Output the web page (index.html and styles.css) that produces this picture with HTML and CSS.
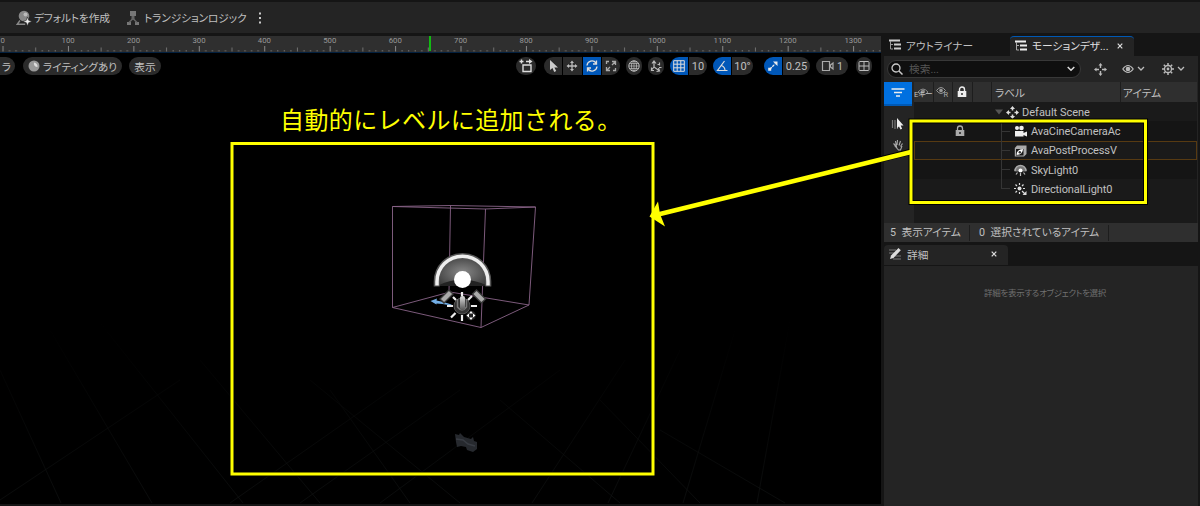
FILE: index.html
```
<!DOCTYPE html>
<html lang="ja">

<head>
  <meta charset="UTF-8">
  <meta name="viewport" content="width=device-width, initial-scale=1.0">
  <title>Motion Design</title>
  <link rel="stylesheet" href="styles.css">
</head>

<body>
  <div class="editor">
    <header class="toolbar">
      <svg class="icon" width="16" height="16" viewBox="0 0 16 16">
        <circle cx="8" cy="6" r="5.3" fill="#888" />
        <circle cx="9.5" cy="4.5" r="2" fill="#bbb" />
        <path d="M4 10.500L1.200 14.300h8" fill="none" stroke="#888" stroke-width="1.400" />
        <path d="M11.500 7l1.200 3.300 3.300 1.200-3.300 1.200L11.500 16l-1.200-3.300L7 11.500l3.300-1.200z" fill="#eee" stroke="#242424" stroke-width=".6" />
      </svg>
      <span class="tool-label tool-default">デフォルトを作成</span>
      <svg class="icon icon-logic" width="14" height="16" viewBox="0 0 14 16">
        <path d="M4 1h6v5H4zM1 12h4v3H1zM9 12h4v3H9z" fill="#777" />
        <path d="M7 6v4" stroke="#666" stroke-width="3" />
        <path d="M7 8.500L3 12.500M7 8.500l4 4" fill="none" stroke="#666" stroke-width="1.500" />
      </svg>
      <span class="tool-label tool-logic">トランジションロジック</span>
      <svg class="icon icon-more" width="4" height="14" viewBox="0 0 4 14">
        <path d="M1 1.500h2v2H1zM1 6h2v2H1zM1 10.500h2v2H1z" fill="#ccc" />
      </svg>
    </header>

    <main class="workspace">
      <section class="stage">
        <div class="ruler">
          <div class="ruler-labels">
            <span>0</span><span>100</span><span>200</span><span>300</span><span>400</span><span>500</span><span>600</span><span>700</span><span>800</span><span>900</span><span>1000</span><span>1100</span><span>1200</span><span>1300</span>
          </div>
          <svg class="ruler-ticks" width="881" height="6">
            <defs>
              <pattern id="ticks" x="2.500" width="65.430" height="6" patternUnits="userSpaceOnUse">
                <path d="M.5 0v5.500" stroke="#888" />
                <path d="M33.200 1.500v4" stroke="#707070" />
                <path d="M7 4v1.500M13.600 4v1.500M20.100 4v1.500M26.700 4v1.500M39.800 4v1.500M46.300 4v1.500M52.800 4v1.500M59.400 4v1.500" stroke="#707070" />
              </pattern>
            </defs>
            <rect width="881" height="6" fill="url(#ticks)" />
          </svg>
          <div class="playhead"></div>
        </div>

        <div class="viewport">
          <svg class="scene" width="881" height="451" viewBox="0 53 881 451">
            <defs>
              <linearGradient id="fade" x1="0" y1="320" x2="0" y2="503" gradientUnits="userSpaceOnUse">
                <stop offset="0" stop-color="#000" />
                <stop offset="1" stop-color="#101212" />
              </linearGradient>
              <radialGradient id="dome" cx=".5" cy=".55" r=".6">
                <stop offset="0" stop-color="#888" />
                <stop offset="1" stop-color="#383838" />
              </radialGradient>
              <linearGradient id="ray" x1="0" y1="0" x2="0" y2="1">
                <stop offset="0" stop-color="#ddd" />
                <stop offset="1" stop-color="#555" />
              </linearGradient>
            </defs>
            <!-- floor grid -->
            <path class="floor" d="M0 370L61 503M50 330L152 503M90 310L243 503M200 360L320 503M330 390L410 503M790 320L757 503M735 330L683 503M680 350L608 503M625 360L532 503M0 500L180 380M230 503L420 370M300 503L460 390M380 503L560 370M310 380L460 503M500 400L620 503M600 400L700 503M660 430L785 503" />
            <!-- bounds -->
            <g class="bounds">
              <path d="M392.500 206.500L450 205.500L535.500 207L485 209ZM392.500 307.500L450 292L529 305L481 327.500Z" />
              <path d="M392.500 206.500V307.500M450.500 205.500L449 292M535.500 207L529 305M485.500 209L481 327.500" />
            </g>
            <path d="M430.500 301l6.500-2.500-.5 2 7 1.500 8 2.500v1l-9-1.500-6-.5v1z" fill="#72aee6" />
            <!-- sky light -->
            <path d="M436 286a26.500 31 0 0 1 53 0z" fill="url(#dome)" />
            <path d="M437 286q25-13 51 0z" fill="#222" />
            <path d="M436.700 286.500v-5a25.800 25.500 0 0 1 51.600 0v5" fill="none" stroke="#555" stroke-width="6" />
            <path d="M437 285.500v-4a25.500 25.300 0 0 1 51 0v4" fill="none" stroke="#eee" stroke-width="3.500" />
            <circle cx="462.500" cy="279.500" r="8.500" fill="#fff" />
            <path d="M441.500 301.500l10-10M484 301.500l-10-10" stroke="#3a3a3a" stroke-width="7" />
            <path d="M442.500 300.500l8-8M483 300.500l-8-8" stroke="#aaa" stroke-width="4.500" />
            <!-- directional light -->
            <circle cx="462" cy="306" r="8" fill="#333" stroke="#555" />
            <path d="M462 292v4M462 315v6M447 306h6M471 306h6M451 317.500l4.500-4.500M453 297l3 3M472 296l-4 4" stroke="#eee" stroke-width="2.200" />
            <path d="M457.500 299v8q4.500 6 9 0v-8" fill="none" stroke="#777" stroke-width="1.500" />
            <rect x="460" y="296" width="5" height="14" rx="2" fill="url(#ray)" />
            <circle cx="471" cy="315.500" r="4.800" fill="#222" />
            <path d="M471 311l2 2.500h-4zM471 320l-2-2.500h4zM466.500 315.500l2.500-2v4zM475.500 315.500l-2.500 2v-4z" fill="#fff" />
            <!-- camera -->
            <path d="M455 434l4 1 1-2 4 4 7 2 2-2 1 4 3 1v7l-4 3-6-2-1-3-5-1-4 1-1-5z" fill="#26292e" />
            <path d="M456 439l7 1 5 4 7 2" fill="none" stroke="#383c43" stroke-width="1.500" />
          </svg>

          <div class="view-controls">
            <span class="pill pill-camera">ラ</span>
            <span class="pill pill-lit">
              <svg width="12" height="12" viewBox="0 0 12 12">
                <circle cx="6" cy="6" r="5.500" fill="#999" />
                <path d="M6 2.500a3.500 3.500 0 0 0 3.500 4.500A4 4 0 0 0 6 2.500z" fill="#ddd" />
              </svg>ライティングあり</span>
            <span class="pill pill-show">表示</span>

            <span class="pill round-wide">
              <svg width="16" height="16" viewBox="0 0 16 16">
                <path d="M5 7h8v6.500H5zM1.500 3.500h4M3.500 1.500v4M8 3.500h4" fill="none" stroke="#ddd" stroke-width="1.400" />
                <path d="M11 1l3.500 2.500L11 6z" fill="#ddd" />
              </svg>
            </span>
            <span class="group transform">
              <span class="cell"><svg width="12" height="14" viewBox="0 0 12 14"><path d="M3 1v10l2.500-2 1.700 4 2-1-1.800-3.500H11z" fill="#ccc" /></svg></span>
              <span class="cell"><svg width="12" height="12" viewBox="0 0 12 12"><path d="M6 2v8M2 6h8" stroke="#bbb" stroke-width="1.300" /><path d="M6 .5l2 2.500H4zM6 11.500L4 9h4zM.5 6L3 4v4zM11.500 6L9 8V4z" fill="#bbb" /></svg></span>
              <span class="cell active"><svg width="14" height="14" viewBox="0 0 14 14"><path d="M2 6.500a5 5 0 0 1 9-2.500M12 7.500a5 5 0 0 1-9 2.500M11.500 1.500V5H8M2.500 12.500V9H6" fill="none" stroke="#ddd" stroke-width="1.300" /></svg></span>
              <span class="cell"><svg width="12" height="12" viewBox="0 0 12 12"><path d="M7 1.500h3.500v3.500M10.500 1.500L7 5M5 10.500H1.500V7M1.500 10.500L5 7M1.500 4V1.500H4M8 10.500h2.500V8" fill="none" stroke="#aaa" stroke-width="1.300" /></svg></span>
            </span>
            <span class="pill round globe">
              <svg width="12" height="12" viewBox="0 0 12 12"><path d="M1 6h10M6 1v10M1.800 3.500h8.400M1.800 8.500h8.400" stroke="#bbb" stroke-width=".7" /><circle cx="6" cy="6" r="5.200" fill="none" stroke="#bbb" /><ellipse cx="6" cy="6" rx="2.500" ry="5" fill="none" stroke="#bbb" stroke-width=".8" /></svg>
            </span>
            <span class="pill round surface">
              <svg width="13" height="13" viewBox="0 0 13 13"><path d="M4 2v5l5 3.500M2 3.500L4 1l2 2.500M6.500 11.500L9.500 11 8.500 8M4 7l-2 2.500M1.500 7.500v3h2.500M7.500 4.500h2M9.500 2.500v3M9 7.500h2.500" fill="none" stroke="#bbb" stroke-width="1.200" /></svg>
            </span>
            <span class="group snap-grid">
              <span class="cell active"><svg width="12" height="12" viewBox="0 0 12 12"><path d="M.7.7h10.600v10.600H.7zM4.200.7v10.600M7.800.7v10.600M.7 4.200h10.600M.7 7.800h10.600" fill="none" stroke="#ddd" /></svg></span>
              <span class="cell">10</span>
            </span>
            <span class="group snap-angle">
              <span class="cell active"><svg width="12" height="12" viewBox="0 0 12 12"><path d="M8.500 1L1.500 10.500H11.500M5.500 5.500q3.500 1.500 3.500 5" fill="none" stroke="#ddd" stroke-width="1.200" /></svg></span>
              <span class="cell">10°</span>
            </span>
            <span class="group snap-scale">
              <span class="cell active"><svg width="12" height="12" viewBox="0 0 12 12"><path d="M3 9l5-5" stroke="#eee" stroke-width="1.300" stroke-dasharray="2.500 .8" /><path d="M6 1.500h4.500V6zM1.200 7.800h3v3h-3z" fill="#eee" /></svg></span>
              <span class="cell">0.25</span>
            </span>
            <span class="pill speed"><svg width="14" height="12" viewBox="0 0 14 12"><path d="M1.500 1.500h7v9h-7zM9.500 5l2.500-2v6L9.500 7z" fill="none" stroke="#aaa" stroke-width="1.200" /></svg>1</span>
            <span class="pill round layout">
              <svg width="12" height="12" viewBox="0 0 12 12"><rect x="1" y="1.500" width="10" height="9" rx="1" fill="none" stroke="#bbb" /><path d="M6 1.500v9M1 6h10" stroke="#bbb" /></svg>
            </span>
          </div>
        </div>
      </section>

      <aside class="sidebar">
        <div class="tabs">
          <div class="tab tab-outliner">
            <svg width="12" height="12" viewBox="0 0 12 12"><path d="M0 1.500h11M5 5.500h7M5 9.500h7" stroke="#ccc" stroke-width="2.200" /><path d="M1.500 2v8H4M1.500 5.500H4" fill="none" stroke="#999" /></svg>
            <span>アウトライナー</span>
          </div>
          <div class="tab tab-motion selected">
            <svg width="12" height="12" viewBox="0 0 12 12"><path d="M0 1.500h11M5 5.500h7M5 9.500h7" stroke="#eee" stroke-width="2.200" /><path d="M1.500 2v8H4M1.500 5.500H4" fill="none" stroke="#aaa" /></svg>
            <span>モーションデザ...</span>
            <svg class="close" width="6" height="6" viewBox="0 0 6 6"><path d="M.7.7l4.600 4.600M5.300.7L.7 5.300" stroke="#ddd" stroke-width="1.200" /></svg>
          </div>
        </div>

        <div class="search-row">
          <div class="search">
            <svg width="12" height="12" viewBox="0 0 12 12"><circle cx="5" cy="5" r="4" fill="none" stroke="#ccc" stroke-width="1.300" /><path d="M8 8l3.500 3.500" stroke="#ccc" stroke-width="1.500" /></svg>
            <span>検索...</span>
            <svg class="chevron" width="8" height="6" viewBox="0 0 8 6"><path d="M.7 1L4 4.300 7.300 1" fill="none" stroke="#ddd" stroke-width="1.500" /></svg>
          </div>
          <svg class="act-move" width="13" height="13" viewBox="0 0 13 13"><path d="M6.500 0l2 2.500h-4zM6.500 13l-2-2.500h4zM0 6.500l2.500-2v4zM13 6.500l-2.500 2v-4zM5.800 2h1.400v3H5.800zM5.800 8h1.400v3H5.800zM2 5.800h3v1.400H2zM8 5.800h3v1.400H8z" fill="#bbb" /></svg>
          <svg class="act-eye" width="24" height="12" viewBox="0 0 24 12"><path d="M.8 6q5.200-7 10.400 0-5.200 7-10.400 0z" fill="none" stroke="#bbb" stroke-width="1.200" /><circle cx="6" cy="6" r="2.300" fill="#bbb" /><path d="M16 4l3 3 3-3" fill="none" stroke="#bbb" stroke-width="1.300" /></svg>
          <svg class="act-gear" width="24" height="12" viewBox="0 0 24 12"><circle cx="6" cy="6" r="3.500" fill="none" stroke="#bbb" stroke-width="1.300" /><circle cx="6" cy="6" r="1.400" fill="#bbb" /><path d="M6 0v2M6 10v2M0 6h2M10 6h2M1.800 1.800l1.500 1.500M8.700 8.700l1.500 1.500M1.800 10.200l1.500-1.500M8.700 3.300l1.500-1.500" stroke="#bbb" stroke-width="1.500" /><path d="M16 4l3 3 3-3" fill="none" stroke="#bbb" stroke-width="1.300" /></svg>
        </div>

        <div class="outliner">
          <div class="side-tools">
            <div class="filter">
              <svg width="14" height="10" viewBox="0 0 14 10"><path d="M.5 1h13M3 4.500h8M5 8h4" stroke="#eee" stroke-width="1.500" /></svg>
            </div>
            <svg class="pick" width="14" height="14" viewBox="0 0 14 14"><path d="M1.500 3v8M4 3v9M6.500 4v8" stroke="#777" stroke-width="1.200" /><path d="M6 1v10l2-1.500 1.500 3 1.600-.8L9.700 8.500H12.500z" fill="#eee" /></svg>
            <svg class="hand" width="12" height="12" viewBox="0 0 12 12"><path d="M1.500 4.500l3 3L3.500 2M5 6L5.500 1M7 6.500L8.500 2M8.500 7.500l2-3M2.500 6.500l4 4.500h2l1.500-4" fill="none" stroke="#aaa" stroke-width="1.100" /></svg>
          </div>

          <div class="tree">
            <div class="tree-head">
              <span class="col narrow eye-col">
                <svg width="12" height="10" viewBox="0 0 12 10"><path d="M1 5q5-6 10 0-5 6-10 0z" fill="none" stroke="#888" /><circle cx="6" cy="4.500" r="2" fill="#888" /></svg>
                <span class="eye-text">Eキー</span>
              </span>
              <span class="col narrow">
                <svg width="14" height="12" viewBox="0 0 14 12"><path d="M.5 4.500q4.500-6 9 0-4.500 6-9 0z" fill="none" stroke="#999" /><circle cx="5" cy="4.500" r="1.800" fill="#999" /><text class="rt" x="7.500" y="11">R</text></svg>
              </span>
              <span class="col narrow">
                <svg width="10" height="12" viewBox="0 0 10 12"><path d="M.7 5h8.600v6H.7z" fill="#eee" /><path d="M2.500 5V3.500a2.500 2.500 0 0 1 5 0V5" fill="none" stroke="#eee" stroke-width="1.400" /><circle cx="5" cy="8" r="1" fill="#333" /></svg>
              </span>
              <span class="col narrow"></span>
              <span class="col col-label">ラベル</span>
              <span class="col col-item">アイテム</span>
            </div>
            <div class="row root">
              <svg class="caret" width="8" height="6" viewBox="0 0 8 6"><path d="M0 .5h8L4 5.500z" fill="#555" /></svg>
              <svg width="13" height="13" viewBox="0 0 13 13"><path d="M6.500 0l2.500 3H7.300v1.500H5.700V3H4zM6.500 13L4 10h1.700V8.500h1.600V10H9zM0 6.500L3 4v1.700h1.500v1.600H3V9zM13 6.500L10 9V7.300H8.500V5.700H10V4z" fill="#ddd" /></svg>
              <span>Default Scene</span>
            </div>
            <div class="row dark locked">
              <svg class="lock" width="10" height="12" viewBox="0 0 10 12"><path d="M.7 5h8.600v6H.7z" fill="#aaa" /><path d="M2.500 5V3.500a2.500 2.500 0 0 1 5 0V5" fill="none" stroke="#aaa" stroke-width="1.300" /><circle cx="5" cy="8" r="1" fill="#222" /></svg>
              <span class="branch"></span>
              <svg width="13" height="12" viewBox="0 0 13 12"><circle cx="3" cy="3" r="2" fill="#eee" /><circle cx="7.500" cy="3" r="2.300" fill="#eee" /><path d="M1 6h8.500v5.500H1zM9.500 8L13 6.500v5L9.500 10z" fill="#eee" /></svg>
              <span>AvaCineCameraAc</span>
            </div>
            <div class="row outlined">
              <span class="branch"></span>
              <svg width="13" height="12" viewBox="0 0 13 12"><path d="M3 .5h9.500V9L10 11.500H.8V3z" fill="#aaa" /><path d="M2 4h7.500v6.500H2z" fill="#1a1a1a" /><path d="M2.500 10q0-5.500 6.500-6 0 5.500-6.500 6z" fill="#fff" /><circle cx="5.800" cy="7.200" r="1.200" fill="#333" /></svg>
              <span>AvaPostProcessV</span>
            </div>
            <div class="row dark">
              <span class="branch"></span>
              <svg width="13" height="12" viewBox="0 0 13 12"><path d="M.5 7.500a6 6 0 0 1 12 0z" fill="#777" /><path d="M1 7a5.500 5.500 0 0 1 11 0" fill="none" stroke="#aaa" stroke-width="1.400" /><circle cx="6.500" cy="6.500" r="2" fill="#fff" /><path d="M6.500 9v3M3.500 8.500l-1.500 2M9.500 8.500l1.500 2" stroke="#bbb" stroke-width="1.200" /></svg>
              <span>SkyLight0</span>
            </div>
            <div class="row last">
              <span class="branch"></span>
              <svg width="13" height="12" viewBox="0 0 13 12"><circle cx="5.500" cy="5.500" r="2" fill="#ddd" /><path d="M5.500 0v2M5.500 9v2M0 5.500h2M9 5.500h2M1.500 1.500L3 3M1.500 9.500L3 8M9.500 1.500L8 3M8 8l3 3" stroke="#ddd" stroke-width="1.200" /><path d="M12.500 8v4h-4z" fill="#ddd" /></svg>
              <span>DirectionalLight0</span>
            </div>
          </div>
        </div>

        <div class="status">
          <span class="count shown">5&ensp;表示アイテム</span>
          <span class="count picked">0&ensp;選択されているアイテム</span>
        </div>

        <div class="tabs details-tabs">
          <div class="tab tab-details">
            <svg width="13" height="12" viewBox="0 0 13 12"><path d="M0 2h7M0 5h5M6 8h6M4 11h8" stroke="#777" /><path d="M1 11l1-3.500L9.500 0l2.300 2.300L4.500 10z" fill="#ddd" /></svg>
            <span>詳細</span>
            <svg class="close" width="6" height="6" viewBox="0 0 6 6"><path d="M.7.7l4.600 4.600M5.300.7L.7 5.300" stroke="#ddd" stroke-width="1.200" /></svg>
          </div>
        </div>
        <div class="details">詳細を表示するオブジェクトを選択</div>
      </aside>
    </main>
  </div>

  <!-- annotations lie over the editor -->
  <svg class="marks" width="1200" height="506" viewBox="0 0 1200 506">
    <g fill="none" stroke="#000" stroke-width="5">
      <rect x="232" y="143.500" width="421" height="330.500" />
      <rect x="911" y="121" width="234.500" height="81.500" />
      <path d="M910 152L658 214.500" stroke-width="6" />
    </g>
    <g fill="none" stroke="#ff0" stroke-width="3">
      <rect x="232" y="143.500" width="421" height="330.500" />
      <rect x="911" y="121" width="234.500" height="81.500" />
      <path d="M911 152L658 214.500" stroke-width="4.500" />
    </g>
    <path d="M649.500 216.500L658 201.500 660 214 665 226.500z" fill="#ff0" />
  </svg>
  <p class="note">自動的にレベルに追加される。</p>
</body>

</html>
```
FILE: styles.css
```
* {
  box-sizing: border-box;
}

body {
  margin: 0;
  height: 506px;
  overflow: hidden;
  background-color: #151515;
  color: #c0c0c0;
  font-family: Roboto, "Noto Sans CJK JP", sans-serif;
  font-size: 10.7px;
  font-feature-settings: "palt";
  white-space: nowrap;
}

svg {
  display: block;
  flex: none;
}

.editor {
  height: 506px;
  padding-top: 2px;
  display: flex;
  flex-direction: column;
}

.toolbar {
  height: 31px;
  flex: none;
  display: flex;
  align-items: center;
  padding-left: 16px;
  background-color: #242424;
}

.tool-label {
  margin-left: 2px;
}

.tool-default {
  width: 92px;
  letter-spacing: -0.1px;
}

.tool-logic {
  width: 114px;
  margin-left: 4px;
  letter-spacing: -0.1px;
}

.workspace {
  flex: 1;
  min-height: 0;
  display: flex;
  padding-top: 3px;
}

.stage {
  width: 881px;
  flex: none;
  padding-bottom: 2px;
  display: flex;
  flex-direction: column;
}

/* ruler */
.ruler {
  position: relative;
  height: 17px;
  flex: none;
  overflow: hidden;
  background-color: #2f2f2f;
  border-bottom: 1px solid #03203f;
}

.ruler-labels {
  display: flex;
  height: 10px;
  margin-left: -30px;
  font-size: 7.8px;
  line-height: 9px;
  color: #999;
}

.ruler-labels span {
  width: 65.430px;
  flex: none;
  text-align: center;
}

.playhead {
  position: absolute;
  left: 429px;
  top: 0;
  width: 2px;
  height: 15px;
  background-color: #12b912;
}

/* viewport */
.viewport {
  position: relative;
  flex: 1;
  background-color: #000;
}

.scene {
  position: absolute;
  left: 0;
  top: 0;
}

.floor {
  fill: none;
  stroke: url(#fade);
  stroke-width: 0.7;
}

.bounds {
  fill: none;
  stroke: #8a6489;
  stroke-width: 0.9;
}

.view-controls {
  position: relative;
  display: flex;
  height: 18px;
  margin-top: 4px;
}

.pill {
  display: flex;
  flex: none;
  align-items: center;
  justify-content: center;
  height: 18px;
  border-radius: 9px;
  background-color: #2b2b2b;
}

.pill-camera {
  width: 15px;
  justify-content: flex-end;
  padding-right: 4px;
  border-radius: 0 9px 9px 0;
}

.pill-lit {
  width: 99px;
  margin-left: 8px;
  gap: 3px;
}

.pill-show {
  width: 32px;
  margin-left: 7px;
}

.round-wide {
  width: 20px;
  margin-left: 355px;
}

.round {
  width: 16px;
}

.group {
  display: flex;
  flex: none;
  gap: 1px;
  height: 18px;
  overflow: hidden;
  border-radius: 9px;
}

.cell {
  display: flex;
  flex: 1;
  align-items: center;
  justify-content: center;
  background-color: #2b2b2b;
  font-size: 11px;
}

.cell.active {
  flex: 0 0 18px;
  background-color: #0057b8;
}

.transform {
  width: 76px;
  margin-left: 8px;
}

.globe {
  margin-left: 6px;
}

.surface {
  margin-left: 6px;
}

.snap-grid {
  width: 37px;
  margin-left: 6px;
}

.snap-angle {
  width: 40px;
  margin-left: 6px;
}

.snap-scale {
  width: 46px;
  margin-left: 11px;
}

.speed {
  width: 32px;
  margin-left: 6px;
  gap: 2px;
}

.layout {
  margin-left: 8px;
}

/* sidebar */
.sidebar {
  flex: 1;
  margin-left: 3px;
  padding-right: 2px;
  display: flex;
  flex-direction: column;
}

.tabs {
  display: flex;
  height: 20px;
  flex: none;
}

.tab {
  display: flex;
  align-items: center;
  padding: 0 0 2px 5px;
  gap: 5px;
}

.tab-outliner {
  width: 126px;
}

.tab-motion {
  width: 124px;
  color: #e0e0e0;
  background-color: #242424;
  border-top: 1px solid #0059b5;
  border-radius: 4px 4px 0 0;
}

.close {
  margin-left: auto;
  margin-right: 11px;
}

.search-row {
  display: flex;
  align-items: center;
  height: 26px;
  flex: none;
  background-color: #242424;
}

.search {
  display: flex;
  align-items: center;
  width: 194px;
  height: 18px;
  margin-left: 3px;
  padding: 0 5px 0 3px;
  gap: 6px;
  border: 1px solid #383838;
  border-radius: 9px;
  background-color: #0f0f0f;
  color: #555;
}

.search span {
  margin-top: -2px;
}

.chevron {
  margin-left: auto;
}

.act-move {
  margin-left: 13px;
}

.act-eye {
  margin-left: 15px;
}

.act-gear {
  margin-left: 16px;
}

.outliner {
  display: flex;
  height: 141px;
  flex: none;
  background-color: #242424;
}

.side-tools {
  width: 30px;
  flex: none;
}

.filter {
  display: flex;
  align-items: center;
  justify-content: center;
  width: 28px;
  height: 24px;
  background-color: #0070e0;
  border-bottom: 2px solid #0059b5;
}

.pick {
  margin: 11px 0 0 7px;
}

.hand {
  margin: 8px 0 0 8px;
}

.tree {
  width: 283px;
  background-color: #1a1a1a;
}

.tree-head {
  display: flex;
  gap: 1px;
  height: 20px;
  background-color: #1d1d1d;
}

.col {
  display: flex;
  align-items: center;
  background-color: #2f2f2f;
}

.narrow {
  width: 18.500px;
  justify-content: center;
}

.eye-text {
  position: absolute;
  margin-top: 3px;
  font-size: 7.5px;
}

.rt {
  font-size: 7.5px;
  fill: #aaa;
}

.col-label {
  width: 128px;
  padding-left: 3px;
}

.col-item {
  flex: 1;
  padding-left: 2px;
}

.row {
  position: relative;
  display: flex;
  align-items: center;
  gap: 4px;
  height: 19.300px;
  padding: 1px 0 0 88px;
  font-size: 11px;
  letter-spacing: -0.1px;
}

.root {
  padding-left: 81px;
  gap: 3px;
  letter-spacing: 0;
}

.dark {
  background-color: #151515;
}

.outlined {
  outline: 1px solid #573a12;
  outline-offset: -1px;
}

.branch {
  width: 8px;
  align-self: stretch;
  margin-bottom: 9px;
  border-bottom: 1px solid #353535;
}

.row .branch::before {
  content: "";
  position: absolute;
  left: 87px;
  top: 0;
  bottom: 0;
  border-left: 1px solid #353535;
}

.last .branch::before {
  bottom: 9px;
}

.lock {
  margin-right: 33px;
}

.locked {
  padding-left: 41px;
}

.status {
  display: flex;
  align-items: center;
  height: 19px;
  flex: none;
  padding-left: 6px;
  background-color: #2f2f2f;
}

.count {
  height: 16px;
  line-height: 16px;
  border-right: 1px solid #1d1d1d;
}

.shown {
  width: 80px;
}

.picked {
  width: 139px;
  padding-left: 9px;
}

.details-tabs {
  margin-top: 3px;
}

.tab-details {
  width: 124px;
  background-color: #242424;
  border-radius: 4px 4px 0 0;
}

.details {
  flex: 1;
  margin-top: 1px;
  padding-top: 20px;
  background-color: #242424;
  color: #707070;
  font-size: 8.5px;
  line-height: 14px;
  text-align: center;
  padding-left: 8px;
  letter-spacing: -0.3px;
}

/* annotations */
.marks {
  position: absolute;
  left: 0;
  top: 0;
}

.note {
  position: absolute;
  left: 280px;
  top: 102px;
  margin: 0;
  color: #ff0;
  font-family: "Noto Sans CJK JP", sans-serif;
  font-size: 24px;
  font-weight: 400;
  line-height: 34px;
  letter-spacing: 0.400px;
  font-feature-settings: normal;
}
```
